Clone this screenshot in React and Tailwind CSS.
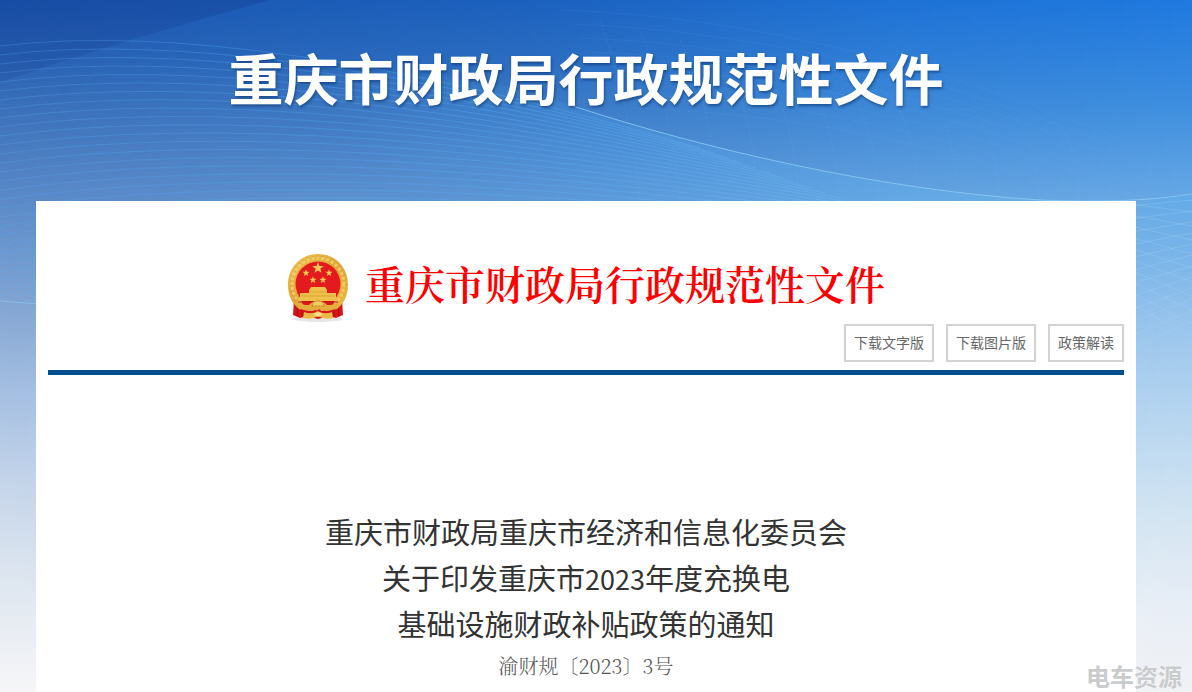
const downloads = ["下载文字版", "下载图片版", "政策解读"];

const titleLines = [
  ["重庆市财政局重庆市经济和信息化委员会"],
  ["关于印发重庆市", "2023", "年度充换电"],
  ["基础设施财政补贴政策的通知"],
];

const range = (n) => Array.from({ length: n }, (_, i) => i);

// Five-pointed star path centred on (cx, cy)
const star = (cx, cy, r) =>
  range(10)
    .map((i) => {
      const a = (Math.PI / 5) * i - Math.PI / 2;
      const k = i % 2 ? r * 0.4 : r;
      return `${i ? "L" : "M"}${cx + k * Math.cos(a)} ${cy + k * Math.sin(a)}`;
    })
    .join("") + "Z";

function Backdrop() {
  return (
    <svg
      className="absolute inset-0 h-full w-full"
      viewBox="0 0 1192 692"
      preserveAspectRatio="none"
      fill="none"
      aria-hidden="true"
    >
      <defs>
        <linearGradient id="leftSky" x1="0" y1="0" x2="0" y2="1">
          <stop offset="0" stopColor="#1a55ae" />
          <stop offset="0.08" stopColor="#2760b3" />
          <stop offset="0.15" stopColor="#3a6fb9" />
          <stop offset="0.29" stopColor="#5b8ac8" />
          <stop offset="0.44" stopColor="#83a5d2" />
          <stop offset="0.57" stopColor="#a6c0e2" />
          <stop offset="0.7" stopColor="#c5d5ea" />
          <stop offset="0.82" stopColor="#dbe4ef" />
          <stop offset="1" stopColor="#f6f6f8" />
        </linearGradient>
        <linearGradient id="rightSky" x1="0" y1="0" x2="0" y2="1">
          <stop offset="0" stopColor="#1f79df" />
          <stop offset="0.15" stopColor="#3d8edf" />
          <stop offset="0.29" stopColor="#68a9e5" />
          <stop offset="0.46" stopColor="#98c4ec" />
          <stop offset="0.6" stopColor="#b6d5f0" />
          <stop offset="0.75" stopColor="#d4e5f2" />
          <stop offset="0.88" stopColor="#e8eef6" />
          <stop offset="1" stopColor="#f0f2f5" />
        </linearGradient>
        <linearGradient id="fade" x1="0" y1="0" x2="1" y2="0">
          <stop offset="0" stopColor="#000" />
          <stop offset="0.45" stopColor="#555" />
          <stop offset="0.75" stopColor="#ccc" />
          <stop offset="1" stopColor="#fff" />
        </linearGradient>
        <linearGradient id="wedge" x1="0" y1="0" x2="0" y2="1">
          <stop offset="0" stopColor="#16459b" stopOpacity="0.5" />
          <stop offset="1" stopColor="#1f4a9b" stopOpacity="0.3" />
        </linearGradient>
        <linearGradient id="wave" x1="0" y1="0" x2="1" y2="0">
          <stop offset="0" stopColor="#4fa8f2" stopOpacity="0" />
          <stop offset="0.4" stopColor="#4fa8f2" stopOpacity="0.2" />
          <stop offset="1" stopColor="#6db9ee" stopOpacity="0.35" />
        </linearGradient>
        <linearGradient id="mesh" x1="0" y1="0" x2="0" y2="1">
          <stop offset="0" stopColor="#5fadea" stopOpacity="0.4" />
          <stop offset="1" stopColor="#7fbbee" stopOpacity="0" />
        </linearGradient>
        <linearGradient id="strand" gradientUnits="userSpaceOnUse" x1="0" y1="0" x2="1000" y2="0">
          <stop offset="0" stopColor="#55a5ee" stopOpacity="0.3" />
          <stop offset="0.4" stopColor="#4fa8f2" stopOpacity="0.4" />
          <stop offset="0.6" stopColor="#58b0f4" stopOpacity="0.4" />
          <stop offset="1" stopColor="#8ccbf4" stopOpacity="0.3" />
        </linearGradient>
        <mask id="fadeMask">
          <path d="M0 0H1192V692H0Z" fill="url(#fade)" />
        </mask>
      </defs>
      <path d="M0 0H1192V692H0Z" fill="url(#leftSky)" />
      <path d="M0 0H1192V692H0Z" fill="url(#rightSky)" mask="url(#fadeMask)" />
      <path d="M0 0H270Q130 38 0 82Z" fill="url(#wedge)" />

      {/* faint globe grid */}
      <g stroke="#8cc4f8" strokeOpacity="0.07">
        {range(8).map((i) => (
          <path key={i} d={`M${560 + i * 10} ${10 + i * 14}Q${860 + i * 10} ${20 + i * 14} 1192 ${170 + i * 10}`} />
        ))}
        {range(12).map((i) => (
          <path key={i} d={`M${600 + i * 40} ${20 + i * 10}Q${630 + i * 40} 100 ${640 + i * 40} 200`} />
        ))}
      </g>

      {/* wave body and its strands */}
      <path d="M330 70Q470 70 570 105C700 148 880 190 1040 200V230H330Z" fill="url(#wave)" />
      <g stroke="url(#strand)">
        {range(27).map((i) => (
          <path
            key={i}
            d={`M0 ${46 + i * 9}Q${250 + i * 6} ${16 + i * 8} ${700 + i * 14} ${148 + i * 5}`}
          />
        ))}
        {range(12).map((i) => (
          <path key={i} d={`M0 ${228 + i * 6}Q20 ${236 + i * 6} 50 ${254 + i * 5}`} />
        ))}
      </g>
      <path d="M570 105C700 148 880 190 1040 200Q1130 204 1192 194" stroke="#8fcdf0" strokeOpacity="0.8" />
      <path d="M0 301L40 304" stroke="#8fc0ec" strokeOpacity="0.8" />
      <path d="M1120 202Q1160 200 1192 194V350H1120Z" fill="url(#mesh)" />
      <g stroke="#b0dcf6" strokeOpacity="0.25">
        {range(12).map((i) => (
          <path key={i} d={`M1130 ${206 + i * 13}L1192 ${200 + i * 11}`} />
        ))}
        {range(10).map((i) => (
          <path key={i} d={`M1130 ${204 + i * 11}L1192 ${212 + i * 14}`} />
        ))}
      </g>
    </svg>
  );
}

function Emblem() {
  return (
    <svg className="h-[70px] w-[62px] shrink-0" viewBox="0 0 62 70" role="img" aria-label="国徽">
      <defs>
        <linearGradient id="gold" x1="0" y1="0" x2="1" y2="1">
          <stop offset="0" stopColor="#efc75a" />
          <stop offset="0.5" stopColor="#dfa637" />
          <stop offset="1" stopColor="#eebb42" />
        </linearGradient>
      </defs>
      <ellipse cx="31" cy="66" rx="24" ry="3" fill="#000" opacity="0.1" />
      {/* drapery */}
      <path d="M7 46L6 62L13 65L20 63L31 66L42 63L49 65L56 62L55 46Z" fill="#d8141a" />
      <path d="M11 53L10 63M15 55V64M47 55V64M51 53L52 63" stroke="#9c1010" fill="none" />
      {/* wheat ring */}
      <path d="M31 1C48 1 61 14 61 32C61 43 57 50 50 56L40 55H22L12 56C5 50 1 43 1 32C1 14 14 1 31 1Z" fill="url(#gold)" />
      <circle cx="31" cy="31" r="26" fill="none" stroke="#f6d678" strokeOpacity="0.7" strokeWidth="3" strokeDasharray="3 2" />
      <circle cx="31" cy="31" r="28" fill="none" stroke="#c58a25" strokeOpacity="0.5" strokeDasharray="2 3" />
      <circle cx="31" cy="31" r="22.5" fill="#e31b1e" />
      <path d="M12 42H50L46 52H16Z" fill="#dc191c" />
      <g fill="#f3cc55">
        <path d={star(31, 15, 6)} />
        <path d={star(19, 20, 3.7)} />
        <path d={star(42, 20, 3.7)} />
        <path d={star(26, 27, 3.7)} />
        <path d={star(36, 27, 3.7)} />
      </g>
      {/* gate tower */}
      <g fill="#efc04c">
        <path d="M24 34H38L40 37H22Z" />
        <path d="M22 37H40V41H22Z" />
        <path d="M13 40H49V46H13Z" />
        <path d="M11 45H51V48H11Z" />
      </g>
      <path d="M14 43H48M24 39H38" stroke="#c88a26" strokeOpacity="0.5" />
      <path d="M11 49H51" stroke="#b91a18" />
      {/* gear and ribbon */}
      <path d="M9 49L21 53Q31 42 41 53L53 49L50 56Q40 60 31 56Q22 60 12 56Z" fill="#e4ad3c" />
      <path d="M25 53A6 5 0 0 1 37 53Z" fill="#f2cd65" stroke="#bd7e20" strokeDasharray="2 1" />
      <path d="M14 56Q23 60 31 57Q39 60 48 56L46 60Q38 62 31 60Q24 62 16 60Z" fill="#d8161b" />
      <path d="M17 59Q25 62 31 58Q37 62 45 59L46 65Q37 67 31 63Q25 67 16 65Z" fill="#ecb945" />
      <path d="M26 61L31 59L36 61L31 64Z" fill="#f8df8b" />
    </svg>
  );
}

export default function App() {
  return (
    <div className="relative min-h-screen overflow-hidden bg-[#f4f5f7] pr-14 pl-9 font-['Noto_Sans_CJK_SC',sans-serif]">
      <Backdrop />

      <header className="relative flex h-[201px] justify-center pt-9">
        <h1 className="text-[55px] leading-[80px] font-bold whitespace-nowrap text-white [text-shadow:1px_2px_3px_rgba(10,50,110,0.6)]">
          重庆市财政局行政规范性文件
        </h1>
      </header>

      <main className="relative min-h-[calc(100vh-201px)] bg-white px-3 pt-[52px]">
        <div className="flex items-start justify-center gap-4">
          <Emblem />
          <h2 className="font-['Noto_Serif_CJK_SC','Noto_Sans_CJK_SC',serif] text-[40px] leading-[60px] font-semibold whitespace-nowrap text-[#ff0000]">
            重庆市财政局行政规范性文件
          </h2>
        </div>

        <div className="mt-px flex justify-end gap-3 border-b-[5px] border-[#00508f] pb-2">
          {downloads.map((label) => (
            <button
              key={label}
              type="button"
              className="h-[38px] border-2 border-[#d2d2d2] px-2 pb-0.5 text-sm text-[#666666]"
            >
              {label}
            </button>
          ))}
        </div>

        <article className="pt-[133px] text-center">
          <h3 className="text-[29px] leading-[46px] text-[#333333]">
            {titleLines.map((parts) => (
              <span key={parts[0]} className="block">
                {parts.map((part) =>
                  part === "2023" ? (
                    <span key={part} className="text-[27px] leading-none">
                      {part}
                    </span>
                  ) : (
                    part
                  )
                )}
              </span>
            ))}
          </h3>
          <p className="pt-0.5 font-['Noto_Serif_CJK_SC','Noto_Sans_CJK_SC',serif] text-xl leading-9 font-light text-[#555555]">
            渝财规〔2023〕3号
          </p>
        </article>
      </main>

      <div className="absolute right-[10px] bottom-0 text-2xl leading-8 font-bold whitespace-nowrap text-[#c9cbcd] [text-shadow:0_0_2px_#ffffff]">
        电车资源
      </div>
    </div>
  );
}
